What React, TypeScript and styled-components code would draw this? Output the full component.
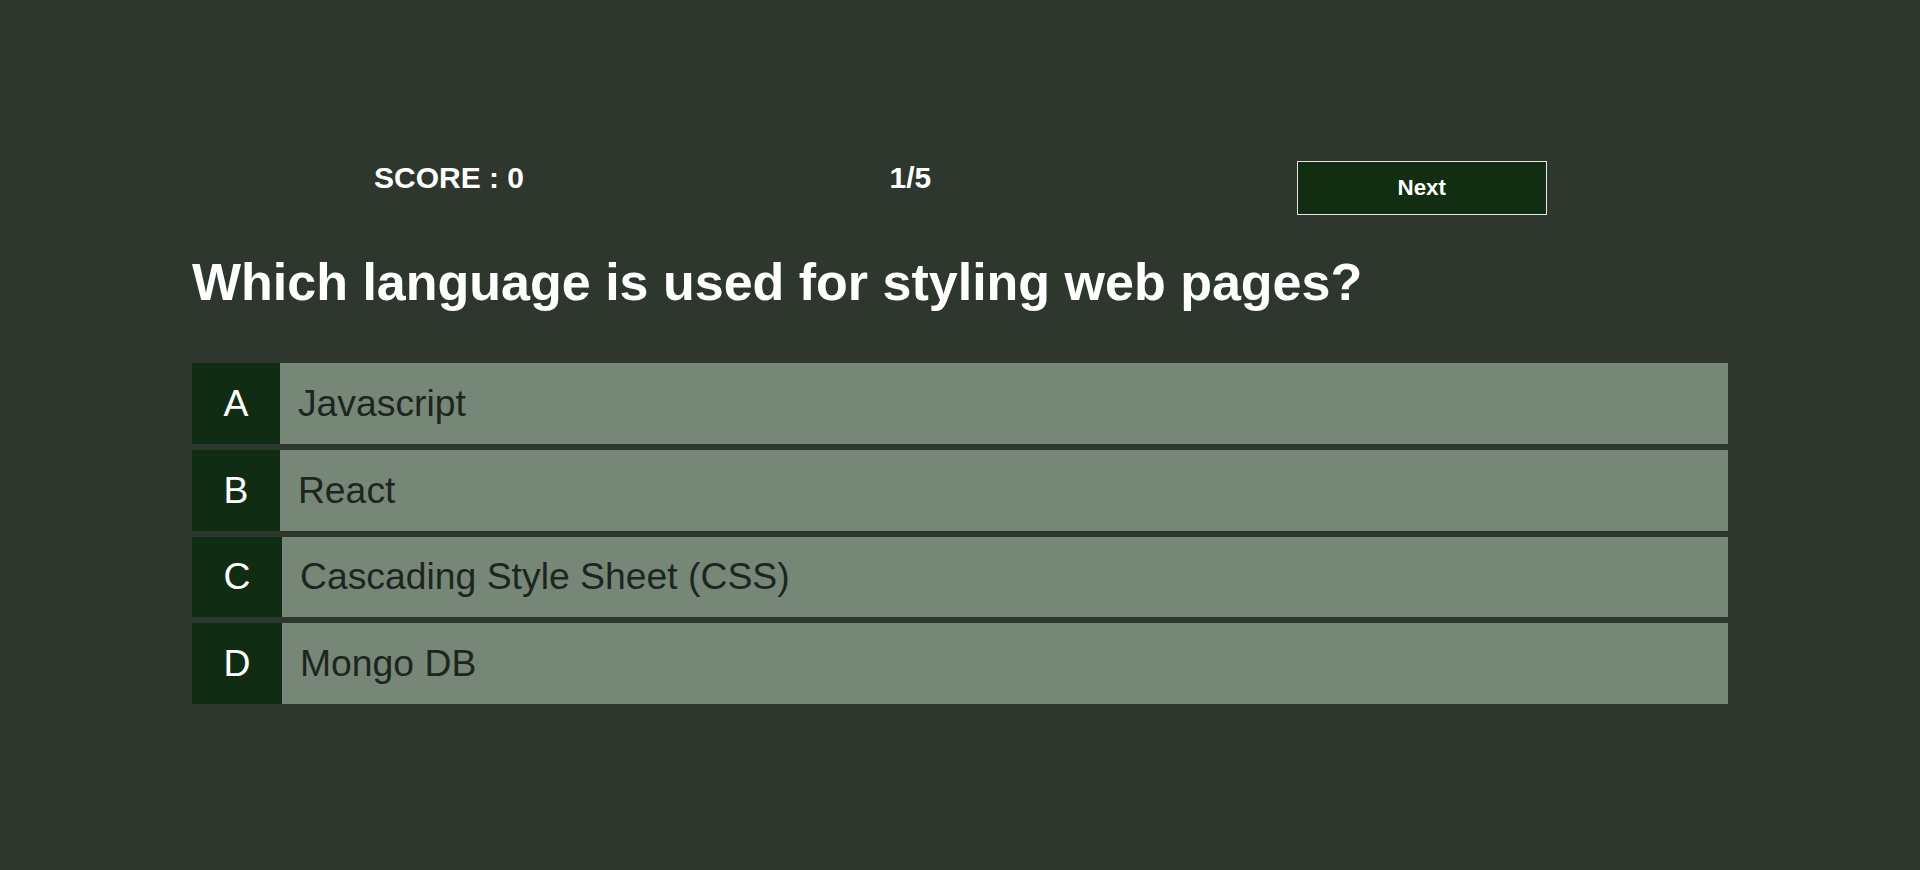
import React from "react";
import styled, { createGlobalStyle } from "styled-components";

const GlobalStyle = createGlobalStyle`
  html, body {
    margin: 0;
    padding: 0;
    background: #2e372d;
    font-family: "Liberation Sans", Arial, sans-serif;
  }
`;

const Page = styled.main`
  min-height: 870px;
  box-sizing: border-box;
  padding: 161px 192px 0 192px;
  background: #2e372d;
`;

const Header = styled.header`
  display: flex;
  align-items: flex-start;
  gap: 365.5px;
  padding-left: 182px;
  height: 53.5px;
`;

const Stat = styled.div`
  color: #ffffff;
  font-size: 30px;
  font-weight: 700;
  white-space: nowrap;
`;

const NextButton = styled.button`
  width: 250px;
  height: 53.5px;
  box-sizing: border-box;
  border: 1px solid #e6e6e6;
  background: #112e13;
  color: #ffffff;
  font-family: "Liberation Sans", Arial, sans-serif;
  font-size: 22.4px;
  font-weight: 700;
  cursor: pointer;
  padding: 0;
`;

const Question = styled.h1`
  margin: 37.5px 0 51.25px 0;
  color: #ffffff;
  font-size: 52px;
  font-weight: 700;
  line-height: normal;
`;

const Options = styled.ul`
  list-style: none;
  margin: 0;
  padding: 0;
  display: flex;
  flex-direction: column;
  gap: 6px;
`;

const Option = styled.li`
  display: flex;
  align-items: stretch;
  min-height: 80.67px;
  background: #768777;
  font-size: 37.33px;
  cursor: pointer;
`;

const Letter = styled.span`
  display: flex;
  align-items: center;
  padding: 0 31.5px;
  background: #102d13;
  color: #ffffff;
`;

const Answer = styled.span`
  display: flex;
  align-items: center;
  padding-left: 18px;
  color: #1e251f;
`;

const options = [
  { key: "A", text: "Javascript" },
  { key: "B", text: "React" },
  { key: "C", text: "Cascading Style Sheet (CSS)" },
  { key: "D", text: "Mongo DB" },
];

export default function App() {
  return (
    <>
      <GlobalStyle />
      <Page>
        <Header>
          <Stat>SCORE : 0</Stat>
          <Stat>1/5</Stat>
          <NextButton>Next</NextButton>
        </Header>
        <Question>Which language is used for styling web pages?</Question>
        <Options>
          {options.map((o) => (
            <Option key={o.key}>
              <Letter>{o.key}</Letter>
              <Answer>{o.text}</Answer>
            </Option>
          ))}
        </Options>
      </Page>
    </>
  );
}
